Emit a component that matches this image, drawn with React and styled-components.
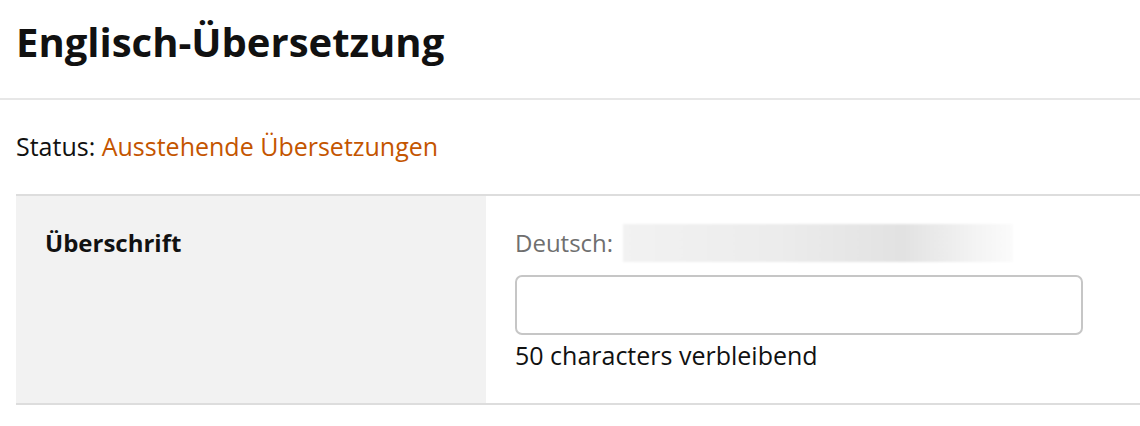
import React from "react";
import styled, { createGlobalStyle } from "styled-components";

const GlobalStyle = createGlobalStyle`
  html, body { margin: 0; padding: 0; background: #fff; }
  body { font-family: "Open Sans", "Noto Sans", sans-serif; color: #111111; }
  * { box-sizing: border-box; }
`;

const Page = styled.div`
  width: 1140px;
  min-height: 426px;
  background: #fff;
`;

const Header = styled.header`
  padding: 18px 0 32px 16px;
  border-bottom: 2px solid #e7e7e7;
`;

const Title = styled.h1`
  margin: 0;
  font-size: 40px;
  font-weight: 700;
  line-height: 48px;
  color: #111111;
`;

const Content = styled.section`
  padding: 29px 0 0 16px;
`;

const StatusLine = styled.p`
  margin: 0 0 30px;
  font-size: 25px;
  line-height: 35px;
  color: #111111;
`;

const StatusValue = styled.span`
  color: #c45500;
`;

const Table = styled.div`
  display: grid;
  grid-template-columns: 470px 1fr;
  border-top: 2px solid #dddddd;
  border-bottom: 2px solid #dddddd;
`;

const LabelCell = styled.div`
  background: #f2f2f2;
  padding: 30px 29px;
  font-size: 24px;
  font-weight: 700;
  line-height: 33.6px;
`;

const FieldCell = styled.div`
  padding: 28px 29px 30px;
  display: flex;
  flex-direction: column;
`;

const SourceRow = styled.div`
  display: flex;
  align-items: center;
  gap: 10px;
  height: 38px;
`;

const SourceLabel = styled.span`
  font-size: 24px;
  line-height: 33.6px;
  color: #6f6f6f;
`;

const Redacted = styled.span`
  display: block;
  width: 390px;
  height: 38px;
  background: linear-gradient(
    90deg,
    #f2f2f2 0%,
    #ececec 40%,
    #e2e2e2 72%,
    #f3f3f3 90%,
    #fbfbfb 100%
  );
  filter: blur(1px);
`;

const TextInput = styled.input`
  margin-top: 13px;
  width: 568px;
  height: 60px;
  border: 2px solid #c6c6c6;
  border-radius: 7px;
  background: #fff;
  font-family: inherit;
  font-size: 24px;
  padding: 0 14px;
  outline: none;
`;

const Counter = styled.div`
  margin-top: 3px;
  font-size: 25px;
  line-height: 35px;
  color: #111111;
`;

export default function App() {
  return (
    <Page>
      <GlobalStyle />
      <Header>
        <Title>Englisch-Übersetzung</Title>
      </Header>
      <Content>
        <StatusLine>
          Status: <StatusValue>Ausstehende Übersetzungen</StatusValue>
        </StatusLine>
        <Table>
          <LabelCell>Überschrift</LabelCell>
          <FieldCell>
            <SourceRow>
              <SourceLabel>Deutsch:</SourceLabel>
              <Redacted />
            </SourceRow>
            <TextInput type="text" aria-label="Englisch" />
            <Counter>50 characters verbleibend</Counter>
          </FieldCell>
        </Table>
      </Content>
    </Page>
  );
}
